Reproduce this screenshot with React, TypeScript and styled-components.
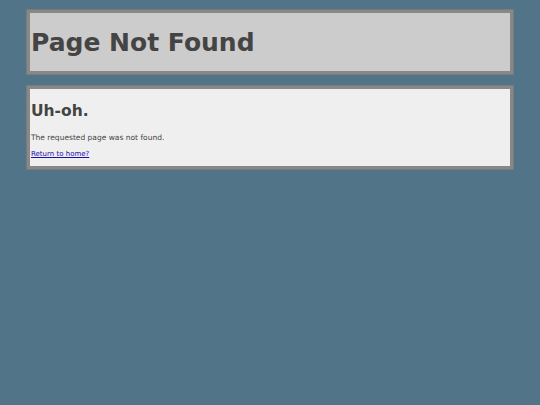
import React from "react"
import styled, { createGlobalStyle } from "styled-components"

const GlobalStyle = createGlobalStyle`
  html, body {
    margin: 0;
    padding: 0;
    background: #527489;
    font-family: "DejaVu Sans", Verdana, sans-serif;
    color: #444;
  }
`

const Page = styled.div`
  padding: 9px 26px;
  display: flex;
  flex-direction: column;
  gap: 10px;
`

const Panel = styled.div<{ $light?: boolean }>`
  background: ${p => (p.$light ? "#efefef" : "#cccccc")};
  border: 4px solid #888;
  outline: 1px solid #7a7a7a;
  outline-offset: -1px;
  padding: 0 1px;
`

const Title = styled.h1`
  margin: 0;
  padding-top: 2px;
  font-size: 25px;
  font-weight: bold;
  line-height: 56px;
`

const SubTitle = styled.h2`
  margin: 13px 0 13px;
  font-size: 15.5px;
  line-height: 18px;
  font-weight: bold;
`

const Text = styled.p`
  margin: 0 0 8px;
  font-size: 7.5px;
  line-height: 9px;
`

const HomeLink = styled.a`
  display: block;
  font-size: 7px;
  line-height: 8px;
  color: #1a0dab;
  margin-bottom: 8px;
`

export default function App() {
  return (
    <>
      <GlobalStyle />
      <Page>
        <Panel>
          <Title>Page Not Found</Title>
        </Panel>
        <Panel $light>
          <SubTitle>Uh-oh.</SubTitle>
          <Text>The requested page was not found.</Text>
          <HomeLink href="#">Return to home?</HomeLink>
        </Panel>
      </Page>
    </>
  )
}
